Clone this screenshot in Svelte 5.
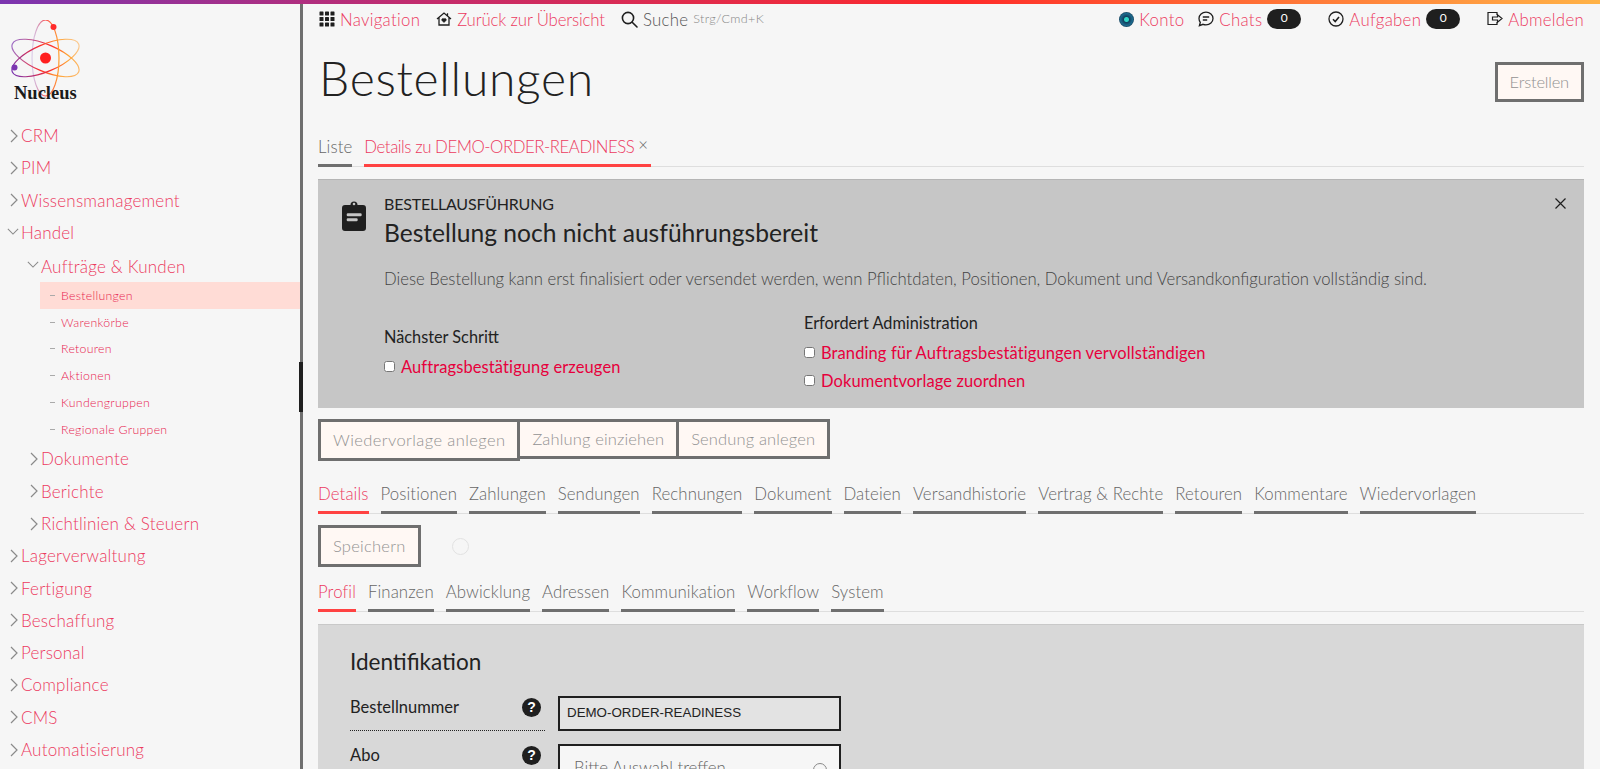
<script>
	const sideTop = ['CRM', 'PIM', 'Wissensmanagement'];
	const subItems = ['Bestellungen', 'Warenkörbe', 'Retouren', 'Aktionen', 'Kundengruppen', 'Regionale Gruppen'];
	const subGroups = ['Dokumente', 'Berichte', 'Richtlinien & Steuern'];
	const sideBottom = ['Lagerverwaltung', 'Fertigung', 'Beschaffung', 'Personal', 'Compliance', 'CMS', 'Automatisierung'];
	const detailTabs = ['Details', 'Positionen', 'Zahlungen', 'Sendungen', 'Rechnungen', 'Dokument', 'Dateien', 'Versandhistorie', 'Vertrag & Rechte', 'Retouren', 'Kommentare', 'Wiedervorlagen'];
	const profileTabs = ['Profil', 'Finanzen', 'Abwicklung', 'Adressen', 'Kommunikation', 'Workflow', 'System'];
</script>

<div class="shell">
	<div class="rainbow"></div>
	<div class="page">
		<aside class="side">
			<div class="logo">
				<svg width="72" height="80" viewBox="0 0 72 80" fill="none">
					<defs>
						<linearGradient id="g1" x1="0" x2="1" y1="0" y2="0">
							<stop offset="0" stop-color="#7b35b0" stop-opacity=".7" />
							<stop offset=".5" stop-color="#ff2a2a" />
							<stop offset=".75" stop-color="#ffa030" />
							<stop offset="1" stop-color="#ffa030" stop-opacity=".7" />
						</linearGradient>
						<linearGradient id="g2" x1="0" x2="1" y1="0" y2="0">
							<stop offset="0" stop-color="#7b35b0" />
							<stop offset=".5" stop-color="#ff2a2a" />
							<stop offset=".75" stop-color="#ffa030" />
							<stop offset="1" stop-color="#ffa030" stop-opacity=".5" />
						</linearGradient>
						<linearGradient id="g3" x1="0" x2="1" y1="0" y2="0">
							<stop offset="0" stop-color="#7b35b0" stop-opacity=".2" />
							<stop offset=".5" stop-color="#ff2a2a" stop-opacity=".8" />
							<stop offset="1" stop-color="#ffa030" />
						</linearGradient>
					</defs>
					<ellipse cx="34.5" cy="38" rx="36" ry="13.5" transform="rotate(23 34.5 38)" stroke="url(#g1)" stroke-width="1.2" />
					<ellipse cx="34.5" cy="38" rx="36" ry="13.5" transform="rotate(-23 34.5 38)" stroke="url(#g2)" stroke-width="1.2" />
					<ellipse cx="34.5" cy="38" rx="13.5" ry="38" stroke="url(#g3)" stroke-width="1.2" />
					<circle cx="34.5" cy="38" r="5.5" fill="#ff1f1f" />
					<circle cx="42.5" cy="7" r="3" fill="#ff2a2a" />
					<circle cx="3.5" cy="47.5" r="3" fill="#7b35b0" />
				</svg>
				<span>Nucleus</span>
			</div>
			<nav class="tree">
				{#each sideTop as item}
					<a class="top"><svg class="chev" viewBox="0 0 10 16"><path d="M2 2l6 6-6 6" /></svg>{item}</a>
				{/each}
				<a class="top"><svg class="chev down" viewBox="0 0 14 10"><path d="M1 2l6 6 6-6" /></svg>Handel</a>
				<a class="top second open"><svg class="chev down" viewBox="0 0 14 10"><path d="M1 2l6 6 6-6" /></svg>Aufträge &amp; Kunden</a>
				<div class="subs">
					{#each subItems as item, i}
						<a class="sub" class:active={i === 0}><i></i>{item}</a>
					{/each}
				</div>
				{#each subGroups as item}
					<a class="top second"><svg class="chev" viewBox="0 0 10 16"><path d="M2 2l6 6-6 6" /></svg>{item}</a>
				{/each}
				{#each sideBottom as item}
					<a class="top"><svg class="chev" viewBox="0 0 10 16"><path d="M2 2l6 6-6 6" /></svg>{item}</a>
				{/each}
			</nav>
			<div class="thumb"></div>
		</aside>

		<main class="main">
			<header class="topnav">
				<div class="navgroup">
					<a class="navlink">
						<svg width="16" height="16" viewBox="0 0 16 16" fill="#1f1f1f"><rect x="0.5" y="0.5" width="4" height="4" rx=".6" /><rect x="6" y="0.5" width="4" height="4" rx=".6" /><rect x="11.5" y="0.5" width="4" height="4" rx=".6" /><rect x="0.5" y="6" width="4" height="4" rx=".6" /><rect x="6" y="6" width="4" height="4" rx=".6" /><rect x="11.5" y="6" width="4" height="4" rx=".6" /><rect x="0.5" y="11.5" width="4" height="4" rx=".6" /><rect x="6" y="11.5" width="4" height="4" rx=".6" /><rect x="11.5" y="11.5" width="4" height="4" rx=".6" /></svg>
						Navigation
					</a>
					<a class="navlink narrow">
						<svg width="16" height="16" viewBox="0 0 16 16" fill="none" stroke="#1f1f1f" stroke-width="1.3"><path d="M1 8l7-6 7 6M3 6.5V14h10V6.5M11.500 2.200v2.400" /><path d="M8 11.500L5.900 9.400a1.300 1.300 0 0 1 2.100-1.500 1.300 1.300 0 0 1 2.100 1.500z" fill="#1f1f1f" stroke-width=".6" /></svg>
						Zurück zur Übersicht
					</a>
					<a class="navlink search">
						<svg width="17" height="17" viewBox="0 0 17 17" fill="none" stroke="#1f1f1f" stroke-width="1.6"><circle cx="7" cy="7" r="5.6" /><path d="M11.200 11.200L16 16" stroke-linecap="round" /></svg>
						Suche <small>Strg/Cmd+K</small>
					</a>
				</div>
				<div class="navgroup right">
					<a class="navlink">
						<span class="avatar"></span>
						Konto
					</a>
					<a class="navlink">
						<svg width="16" height="16" viewBox="0 0 16 16" fill="none" stroke="#1f1f1f" stroke-width="1.3"><path d="M8 1.200c3.900 0 7 2.800 7 6.300s-3.100 6.300-7 6.300c-1 0-2-.2-2.900-.5L1.400 14.700l.9-3.400C1.500 10.300 1 9 1 7.500 1 4 4.100 1.200 8 1.200z" /><path d="M4.800 6h6.400M4.800 9h4.400" /></svg>
						Chats <b class="pill">0</b>
					</a>
					<a class="navlink tasks">
						<svg width="16" height="16" viewBox="0 0 16 16" fill="none" stroke="#1f1f1f" stroke-width="1.3"><circle cx="8" cy="8" r="7" /><path d="M5 8.300l2.200 2.200L11 6" stroke-width="1.600" /></svg>
						Aufgaben <b class="pill">0</b>
					</a>
					<a class="navlink logout">
						<svg width="16" height="16" viewBox="0 0 16 16" fill="none" stroke="#1f1f1f" stroke-width="1.200"><path d="M10 4V1.500H1v12h9V11" /><path d="M5.500 6h5V3.800L15 7.500l-4.500 3.700V9h-5z" /></svg>
						Abmelden
					</a>
				</div>
			</header>

			<div class="titlerow">
				<h1>Bestellungen</h1>
				<button class="btn erstellen">Erstellen</button>
			</div>

			<div class="tabs first">
				<a class="tab">Liste</a>
				<a class="tab on wide">Details zu DEMO-ORDER-READINESS<em>×</em></a>
			</div>

			<section class="alert">
				<svg class="clip" width="24" height="32" viewBox="0 0 24 32"><path fill="#1f1f1f" d="M3 6h5.500a3.500 3.500 0 0 1 7 0H21a3 3 0 0 1 3 3v20a3 3 0 0 1-3 3H3a3 3 0 0 1-3-3V9a3 3 0 0 1 3-3z" /><circle cx="12" cy="5" r="1.300" fill="#c6c6c6" /><rect x="4.700" y="14.300" width="15" height="3" rx="1.200" fill="#c6c6c6" /><rect x="4.700" y="19.300" width="11" height="3" rx="1.200" fill="#c6c6c6" /></svg>
				<div class="alertbody">
					<div class="eyebrow">BESTELLAUSFÜHRUNG</div>
					<h2>Bestellung noch nicht ausführungsbereit</h2>
					<p>Diese Bestellung kann erst finalisiert oder versendet werden, wenn Pflichtdaten, Positionen, Dokument und Versandkonfiguration vollständig sind.</p>
					<div class="steps">
						<div class="stepcol">
							<h3>Nächster Schritt</h3>
							<label><input type="checkbox" /><a>Auftragsbestätigung erzeugen</a></label>
						</div>
						<div class="stepcol">
							<h3>Erfordert Administration</h3>
							<label><input type="checkbox" /><a>Branding für Auftragsbestätigungen vervollständigen</a></label>
							<label><input type="checkbox" /><a>Dokumentvorlage zuordnen</a></label>
						</div>
					</div>
				</div>
				<svg class="close" width="11" height="11" viewBox="0 0 11 11" stroke="#1f1f1f" stroke-width="1.200"><path d="M.5.500l10 10M10.500.500l-10 10" /></svg>
			</section>

			<div class="actions">
				<button class="btn tall first-action">Wiedervorlage anlegen</button>
				<button class="btn joined">Zahlung einziehen</button>
				<button class="btn joined">Sendung anlegen</button>
			</div>

			<div class="tabs details">
				{#each detailTabs as t, i}
					<a class="tab" class:on={i === 0}>{t}</a>
				{/each}
			</div>

			<div class="saverow">
				<button class="btn tall">Speichern</button>
				<span class="ghost"></span>
			</div>

			<div class="tabs profile">
				{#each profileTabs as t, i}
					<a class="tab" class:on={i === 0}>{t}</a>
				{/each}
			</div>

			<section class="panel">
				<h2>Identifikation</h2>
				<div class="field">
					<div class="flabel dotted"><span>Bestellnummer</span><b class="help">?</b></div>
					<div class="readonly">DEMO-ORDER-READINESS</div>
				</div>
				<div class="field">
					<div class="flabel"><span>Abo</span><b class="help">?</b></div>
					<div class="select">Bitte Auswahl treffen<i></i></div>
				</div>
			</section>
		</main>
	</div>
</div>

<style>
	:global(body) {
		margin: 0;
		background: #f6f6f6;
		overflow: hidden;
	}

	.shell {
		height: 769px;
		overflow: hidden;
		font-family: Lato, 'Noto Sans', sans-serif;
		color: #222;
		font-size: 18px;
		position: relative;
	}

	.rainbow {
		height: 4px;
		background: linear-gradient(90deg, #7b35b0 0%, #c02c70 25%, #ff2a2a 60%, #ff5a30 72%, #ffb347 100%);
	}

	.page {
		display: flex;
		height: 765px;
	}

	.side {
		width: 300px;
		flex: none;
		border-right: 3px solid #6f6f6f;
		position: relative;
	}

	.logo {
		padding: 16px 0 0 11px;
		height: 103px;
		box-sizing: border-box;
		display: flex;
		flex-direction: column;
	}

	.logo span {
		font: bold 18.500px 'Liberation Serif', serif;
		color: #1a1a1a;
		margin: -17px 0 0 3px;
		position: relative;
	}

	.tree {
		display: flex;
		flex-direction: column;
		padding-top: 12.500px;
		overflow: hidden;
		height: 648px;
	}

	a {
		color: #ec3a5f;
		cursor: pointer;
	}

	.top {
		display: flex;
		align-items: center;
		flex: none;
		height: 32.300px;
		padding-left: 21px;
		position: relative;
		font-size: 17px;
		font-weight: 300;
		letter-spacing: 0.200px;
	}

	.top.second {
		padding-left: 41px;
	}

	.top.open {
		margin-top: 1.500px;
	}

	.chev {
		position: absolute;
		left: 9px;
		top: 50%;
		width: 10px;
		height: 16px;
		margin-top: -8px;
		fill: none;
		stroke: #8a8a8a;
		stroke-width: 1.200;
	}

	.chev.down {
		left: 7px;
		width: 12px;
		height: 9px;
		margin-top: -6px;
	}

	.second .chev {
		left: 29px;
	}

	.second .chev.down {
		left: 27px;
	}

	.subs {
		display: flex;
		flex-direction: column;
		flex: none;
		margin: -0.500px 0 0 40px;
	}

	.sub {
		display: flex;
		align-items: center;
		height: 26.800px;
		font-size: 12.300px;
		font-weight: 300;
		letter-spacing: 0.300px;
		color: #e8234f;
		padding-left: 10px;
		gap: 6px;
	}

	.sub i {
		width: 5px;
		height: 1px;
		background: #aaa;
	}

	.sub.active {
		background: #ffdcd6;
	}

	.thumb {
		position: absolute;
		right: -3px;
		top: 358px;
		width: 4px;
		height: 50px;
		background: #1f1f1f;
	}

	.main {
		flex: 1;
		min-width: 0;
		padding: 0 16px 0 15px;
		display: flex;
		flex-direction: column;
		overflow: hidden;
	}

	.main > * {
		flex: none;
	}

	.topnav {
		display: flex;
		justify-content: space-between;
		height: 30px;
		align-items: center;
	}

	.navgroup {
		display: flex;
		align-items: center;
		gap: 16px;
		padding-left: 1px;
	}

	.navgroup.right {
		gap: 14px;
	}

	.navlink {
		display: flex;
		align-items: center;
		gap: 5px;
		font-size: 16.800px;
		font-weight: 300;
		letter-spacing: 0.300px;
		white-space: nowrap;
	}

	.navlink.narrow {
		letter-spacing: -0.150px;
	}

	.search {
		color: #555;
	}

	.search small {
		font-size: 12.600px;
		color: #888;
		margin-top: -2px;
	}

	.avatar {
		width: 15px;
		height: 15px;
		border-radius: 50%;
		background: radial-gradient(circle, #2fd6c6 0 2px, #12405f 3px, #1c6a8e 6px, #16384f 8px);
	}

	.pill {
		display: inline-block;
		width: 34px;
		height: 20px;
		line-height: 18px;
		border-radius: 10px;
		background: #1f1f1f;
		color: #fff;
		font-size: 12px;
		font-weight: 400;
		text-align: center;
		margin-top: -1px;
		letter-spacing: 0;
	}

	.tasks {
		margin-left: 13px;
	}

	.logout {
		margin-left: 13px;
	}

	.titlerow {
		display: flex;
		justify-content: space-between;
		align-items: center;
		height: 68px;
		margin-top: 14px;
	}

	h1 {
		margin: 0;
		font-size: 48px;
		font-weight: 300;
		letter-spacing: 0.700px;
		color: #222;
		padding: 0 0 9px 1px;
	}

	.btn {
		border: 3px solid #6f6f6f;
		background: #fff8f4;
		color: #929292;
		font: 300 16.500px Lato, sans-serif;
		letter-spacing: 0.250px;
		height: 40px;
		padding: 0 12px;
		box-sizing: border-box;
		white-space: nowrap;
	}

	.btn.erstellen {
		letter-spacing: -0.200px;
	}

	.btn.first-action {
		letter-spacing: 0.400px;
	}

	.tabs {
		display: flex;
		gap: 12px;
		border-bottom: 1px solid #dedede;
	}

	.tabs.first {
		margin-top: 17px;
		height: 33px;
	}

	.tab {
		display: flex;
		align-items: flex-end;
		line-height: 20px;
		padding-bottom: 7px;
		color: #666;
		border-bottom: 3px solid #6f6f6f;
		margin-bottom: -1px;
		font-size: 16.800px;
		font-weight: 300;
		letter-spacing: 0.100px;
		white-space: nowrap;
		box-sizing: border-box;
	}

	.tab.on {
		color: #ec3a5f;
		border-bottom-color: #ff4242;
	}

	.tab.wide {
		letter-spacing: -0.440px;
		padding-right: 3px;
	}

	.tab em {
		font-style: normal;
		color: #666;
		margin: 0 0 2px 4px;
	}

	.alert {
		margin-top: 12px;
		background: #c6c6c6;
		border-top: 1px solid #b5b5b5;
		height: 229px;
		box-sizing: border-box;
		position: relative;
		display: flex;
		padding: 19px 0 0 24px;
		gap: 18px;
	}

	.clip {
		flex: none;
	}

	.eyebrow {
		font-size: 16px;
		font-weight: 400;
		line-height: 20px;
		letter-spacing: -0.200px;
		margin-top: -5px;
	}

	.alert h2 {
		margin: 3px 0 0;
		font-size: 24.600px;
		line-height: 32px;
		font-weight: 400;
	}

	.alert p {
		margin: 17.500px 0 0;
		font-size: 16.700px;
		font-weight: 300;
		line-height: 24px;
		letter-spacing: 0;
		color: #444;
		white-space: nowrap;
	}

	.steps {
		display: flex;
		align-items: center;
		margin-top: 20.500px;
	}

	.stepcol {
		width: 420px;
		display: flex;
		flex-direction: column;
	}

	.stepcol:last-child {
		width: auto;
	}

	.stepcol h3 {
		margin: 0 0 4px;
		font-size: 16.300px;
		line-height: 24px;
		font-weight: 400;
	}

	.stepcol label {
		display: flex;
		align-items: center;
		height: 28px;
		gap: 6px;
	}

	.stepcol input {
		margin: -1px 0 0;
		width: 11px;
		height: 11px;
	}

	.stepcol a {
		color: #e6003c;
		font-size: 16.500px;
		font-weight: 400;
		letter-spacing: 0.100px;
	}

	.close {
		position: absolute;
		right: 18px;
		top: 18px;
	}

	.actions {
		display: flex;
		align-items: flex-start;
		margin-top: 11px;
	}

	.btn.tall {
		height: 42px;
		padding: 0 12px;
	}

	.btn.joined {
		margin-left: -3px;
		letter-spacing: 0.150px;
	}

	.tabs.details {
		margin-top: 10px;
		height: 42px;
	}

	.saverow {
		display: flex;
		align-items: center;
		margin-top: 11px;
		gap: 31px;
	}

	.ghost {
		width: 15px;
		height: 15px;
		border: 1px solid #e2e2e2;
		border-radius: 50%;
	}

	.tabs.profile {
		margin-top: 7px;
		height: 37px;
	}

	.panel {
		margin-top: 12px;
		background: #d8d8d8;
		border-top: 1px solid #c9c9c9;
		padding: 20px 32px;
		flex: 1 0 auto;
	}

	.panel h2 {
		margin: 0 0 17px;
		font-size: 22.500px;
		line-height: 34px;
		font-weight: 400;
	}

	.field {
		display: flex;
		align-items: flex-start;
		gap: 13px;
		margin-bottom: 13px;
	}

	.flabel {
		width: 195px;
		height: 34px;
		padding-bottom: 12px;
		box-sizing: border-box;
		display: flex;
		justify-content: space-between;
		align-items: center;
		font-size: 16.500px;
	}

	.flabel.dotted {
		height: 35px;
		border-bottom: 1px dotted #222;
	}

	.help {
		width: 19px;
		height: 19px;
		margin-right: 4px;
		border-radius: 50%;
		background: #1f1f1f;
		color: #fff;
		font: bold 14px/19px 'Liberation Sans', sans-serif;
		text-align: center;
	}

	.readonly {
		width: 283px;
		height: 35px;
		box-sizing: border-box;
		border: 2px solid #1f1f1f;
		background: #e3e3e3;
		padding-left: 7px;
		font: 13.333px/29px 'Liberation Sans', Arial, sans-serif;
		color: #222;
	}

	.select {
		width: 283px;
		height: 50px;
		box-sizing: border-box;
		border: 2px solid #1f1f1f;
		background: #f6f6f6;
		padding: 11px 14px;
		font-size: 16.800px;
		font-weight: 300;
		color: #666;
		position: relative;
	}

	.select i {
		position: absolute;
		right: 12px;
		top: 17px;
		width: 12px;
		height: 12px;
		border: 1px solid #888;
		border-radius: 50%;
	}
</style>
